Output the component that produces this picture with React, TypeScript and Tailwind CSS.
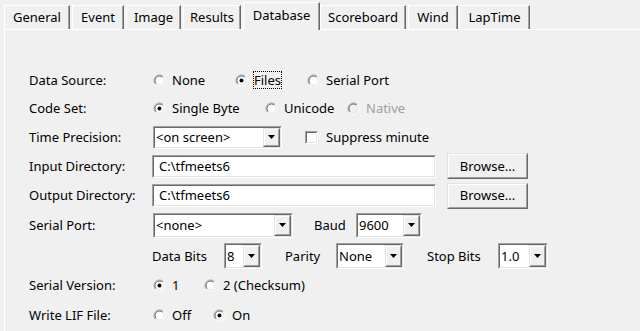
import type { ReactNode } from 'react';

const tabs = [
  { name: 'General', cls: 'w-[66px]' },
  { name: 'Event', cls: 'w-[52px] ml-[2px]' },
  { name: 'Image', cls: 'w-[55px] ml-[2px]' },
  { name: 'Results', cls: 'w-[58px] ml-[2px]' },
  { name: 'Database', cls: 'w-[77px] ml-[2px]', active: true },
  { name: 'Scoreboard', cls: 'w-[86px]' },
  { name: 'Wind', cls: 'w-[50px] ml-[2px]' },
  { name: 'LapTime', cls: 'w-[71px] ml-[1px]' },
];

function arc(r: number, c: number, topLeft: boolean) {
  const d = r / Math.SQRT2;
  const bl = `${c - d} ${c + d}`;
  const tr = `${c + d} ${c - d}`;
  return topLeft ? `M${bl} A${r} ${r} 0 0 1 ${tr}` : `M${tr} A${r} ${r} 0 0 1 ${bl}`;
}

function Radio({ checked, disabled }: { checked?: boolean; disabled?: boolean }) {
  const c = 6.5;
  return (
    <svg width="13" height="13" viewBox="0 0 13 13" className="shrink-0">
      <circle cx={c} cy={c} r="5" fill={disabled ? '#f0f0f0' : '#fff'} />
      <path d={arc(5.5, c, true)} stroke="#a0a0a0" fill="none" />
      <path d={arc(5.5, c, false)} stroke="#fff" fill="none" />
      <path d={arc(4.5, c, true)} stroke="#696969" fill="none" />
      <path d={arc(4.5, c, false)} stroke="#e3e3e3" fill="none" />
      {checked && <circle cx={c} cy={c} r="2" fill="#000" />}
    </svg>
  );
}

function RadioItem({ label, checked, disabled, focus, w }: { label: string; checked?: boolean; disabled?: boolean; focus?: boolean; w?: string }) {
  return (
    <div className={`flex items-center gap-[6px] ml-[1px] ${w ?? ''}`}>
      <Radio checked={checked} disabled={disabled} />
      <span className={`${disabled ? 'text-[#a0a0a0]' : ''} ${focus ? 'border border-dotted border-black leading-[16px] -mx-[1px] px-[0px]' : ''}`}>{label}</span>
    </div>
  );
}

function Sunken({ cls, children, bg = 'bg-white' }: { cls: string; children?: ReactNode; bg?: string }) {
  return (
    <div className={`flex shrink-0 border border-t-[#a0a0a0] border-l-[#a0a0a0] border-b-white border-r-white ${cls}`}>
      <div className={`flex flex-1 min-w-0 border border-t-[#696969] border-l-[#696969] border-b-[#e3e3e3] border-r-[#e3e3e3] ${bg}`}>
        {children}
      </div>
    </div>
  );
}

function Raised({ cls, children }: { cls: string; children?: ReactNode }) {
  return (
    <div className={`flex shrink-0 border border-t-[#e3e3e3] border-l-[#e3e3e3] border-b-[#696969] border-r-[#696969] ${cls}`}>
      <div className="flex flex-1 items-center justify-center border border-t-white border-l-white border-b-[#a0a0a0] border-r-[#a0a0a0] bg-[#f0f0f0]">
        {children}
      </div>
    </div>
  );
}

function Combo({ cls, value }: { cls: string; value: string }) {
  return (
    <Sunken cls={cls}>
      <span className="flex-1 flex items-center pl-[1px] whitespace-nowrap overflow-hidden">{value}</span>
      <Raised cls="w-[17px]">
        <svg width="7" height="4" viewBox="0 0 7 4">
          <path d="M0 0H7L3.5 4Z" fill="#000" />
        </svg>
      </Raised>
    </Sunken>
  );
}

function Row({ label, h, children }: { label?: string; h: string; children: ReactNode }) {
  return (
    <div className={`flex items-center ${h}`}>
      <div className="w-[123px] shrink-0">{label}</div>
      <div className="flex items-center">{children}</div>
    </div>
  );
}

export default function App() {
  return (
    <div className="w-[640px] h-[331px] overflow-hidden bg-[#f0f0f0] text-black text-[13px] leading-none" style={{ fontFamily: '"Noto Sans", "Open Sans", sans-serif' }}>
      <div className="flex items-end h-[29px] pl-[4px]">
        {tabs.map((t) =>
          t.active ? (
            <div key={t.name} className={`relative z-10 -mb-[1px] h-[28px] flex items-center justify-center bg-[#f0f0f0] border-t border-l border-white border-r border-r-[#696969] shadow-[inset_-1px_0_0_#a0a0a0] pb-[3px] ${t.cls}`}>
              {t.name}
            </div>
          ) : (
            <div key={t.name} className={`h-[24px] flex items-center justify-center bg-[#f0f0f0] border-t border-l border-white border-r border-r-[#696969] shadow-[inset_-1px_0_0_#a0a0a0] ${t.cls}`}>
              {t.name}
            </div>
          )
        )}
      </div>
      <div className="ml-[4px] h-[302px] border-t border-l border-white pt-[36px] pl-[24px]">
        <Row label="Data Source:" h="h-[28px]">
          <RadioItem label="None" w="w-[81px]" />
          <RadioItem label="Files" checked focus w="w-[71px]" />
          <RadioItem label="Serial Port" />
        </Row>
        <Row label="Code Set:" h="h-[29px]">
          <RadioItem label="Single Byte" checked w="w-[111px]" />
          <RadioItem label="Unicode" w="w-[81px]" />
          <RadioItem label="Native" disabled />
        </Row>
        <Row label="Time Precision:" h="h-[28px]">
          <Combo cls="ml-[1px] w-[129px] h-[23px]" value="<on screen>" />
          <Sunken cls="ml-[23px] w-[13px] h-[13px]" />
          <span className="ml-[8px]">Suppress minute</span>
        </Row>
        <Row label="Input Directory:" h="h-[30px]">
          <Sunken cls="w-[284px] h-[23px]">
            <span className="flex items-center pl-[5px]">C:\tfmeets6</span>
          </Sunken>
          <Raised cls="ml-[11px] w-[81px] h-[26px]">Browse...</Raised>
        </Row>
        <Row label="Output Directory:" h="h-[29px]">
          <Sunken cls="w-[284px] h-[23px]">
            <span className="flex items-center pl-[5px]">C:\tfmeets6</span>
          </Sunken>
          <Raised cls="ml-[11px] w-[81px] h-[26px]">Browse...</Raised>
        </Row>
        <Row label="Serial Port:" h="h-[30px]">
          <Combo cls="ml-[1px] w-[140px] h-[25px]" value="<none>" />
          <span className="ml-[21px] w-[42px]">Baud</span>
          <Combo cls="w-[66px] h-[25px]" value="9600" />
        </Row>
        <Row h="h-[32px]">
          <span className="w-[72px]">Data Bits</span>
          <Combo cls="w-[38px] h-[26px]" value="8" />
          <span className="ml-[23px] w-[51px]">Parity</span>
          <Combo cls="w-[68px] h-[26px]" value="None" />
          <span className="ml-[23px] w-[71px]">Stop Bits</span>
          <Combo cls="w-[50px] h-[26px]" value="1.0" />
        </Row>
        <Row label="Serial Version:" h="h-[27px]">
          <RadioItem label="1" checked w="w-[50px]" />
          <RadioItem label="2 (Checksum)" />
        </Row>
        <Row label="Write LIF File:" h="h-[32px]">
          <RadioItem label="Off" w="w-[59px]" />
          <RadioItem label="On" checked />
        </Row>
      </div>
    </div>
  );
}
